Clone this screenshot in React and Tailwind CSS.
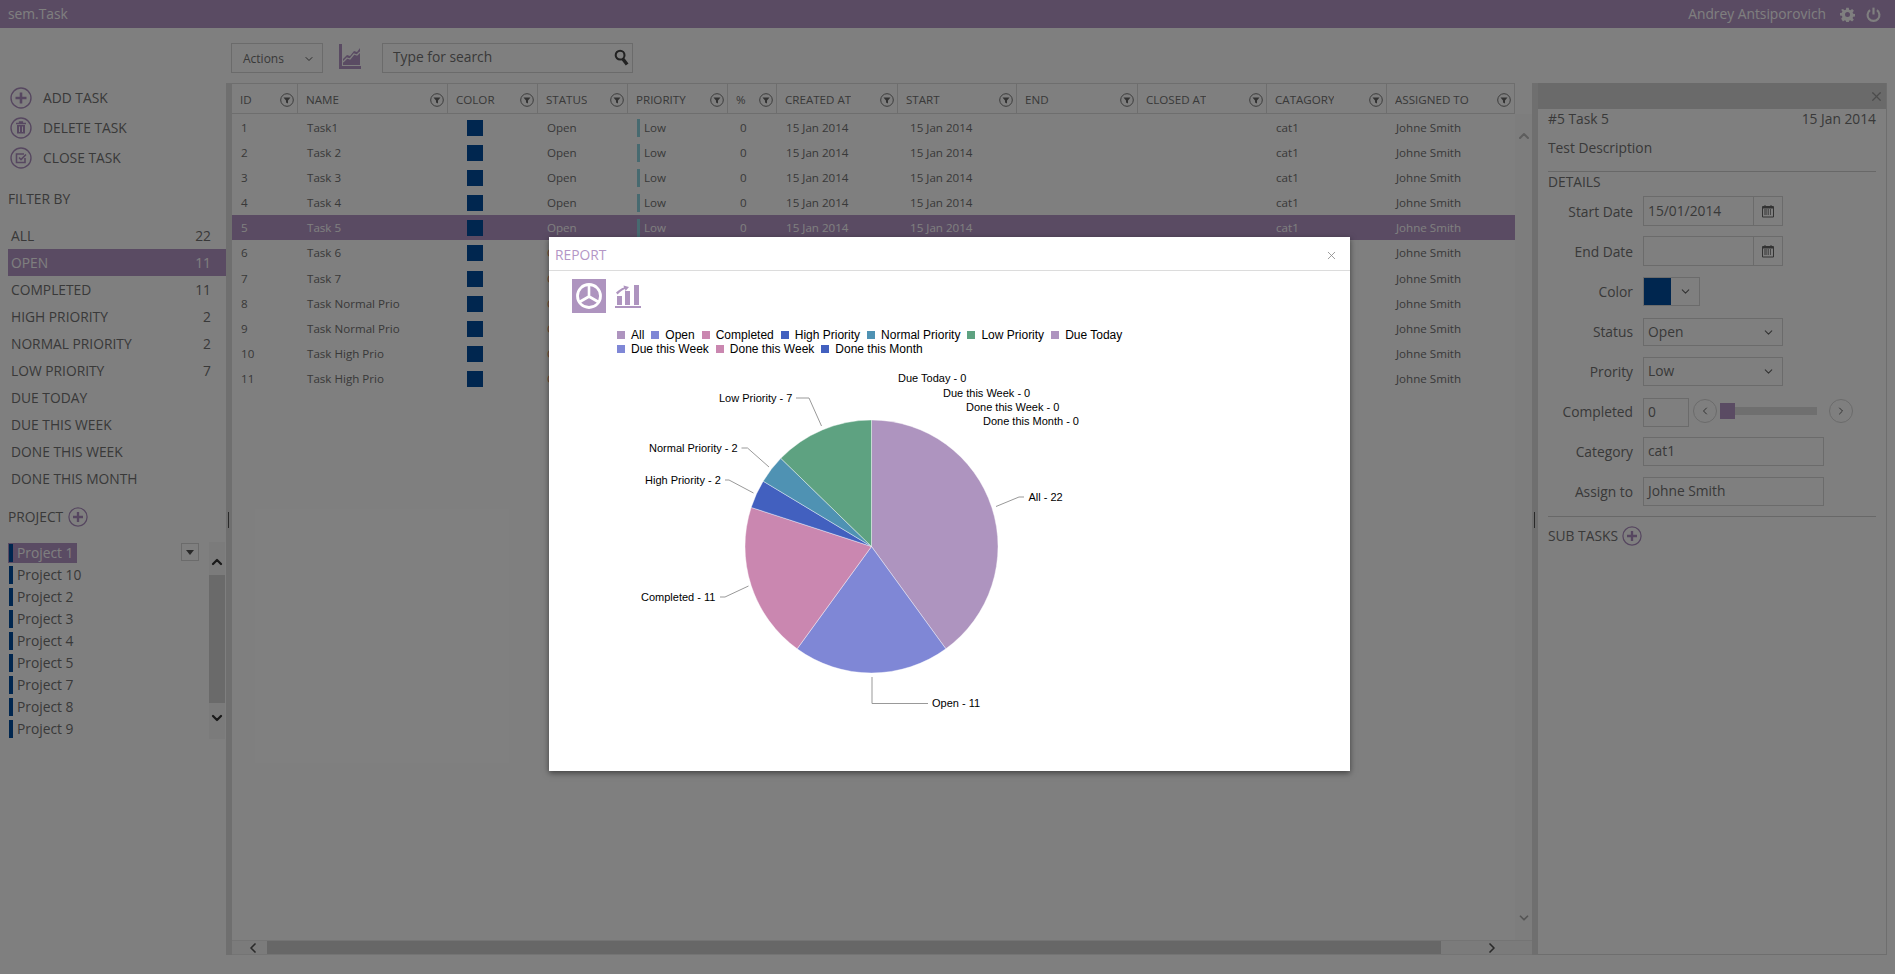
import { ChevronDown, ChevronLeft, ChevronRight, ChevronUp, X } from 'lucide-react';

const COLUMNS = [
  { label: 'ID' },
  { label: 'NAME' },
  { label: 'COLOR' },
  { label: 'STATUS' },
  { label: 'PRIORITY' },
  { label: '%' },
  { label: 'CREATED AT' },
  { label: 'START' },
  { label: 'END' },
  { label: 'CLOSED AT' },
  { label: 'CATAGORY' },
  { label: 'ASSIGNED TO' },
];

const TASKS = [
  { id: 1, name: 'Task1' },
  { id: 2, name: 'Task 2' },
  { id: 3, name: 'Task 3' },
  { id: 4, name: 'Task 4' },
  { id: 5, name: 'Task 5', selected: true },
  { id: 6, name: 'Task 6', late: true, tall: true },
  { id: 7, name: 'Task 7', late: true },
  { id: 8, name: 'Task Normal Prio', late: true },
  { id: 9, name: 'Task Normal Prio', late: true },
  { id: 10, name: 'Task High Prio', late: true },
  { id: 11, name: 'Task High Prio', late: true },
];

const FILTERS = [
  { label: 'ALL', count: 22 },
  { label: 'OPEN', count: 11, selected: true },
  { label: 'COMPLETED', count: 11 },
  { label: 'HIGH PRIORITY', count: 2 },
  { label: 'NORMAL PRIORITY', count: 2 },
  { label: 'LOW PRIORITY', count: 7 },
  { label: 'DUE TODAY' },
  { label: 'DUE THIS WEEK' },
  { label: 'DONE THIS WEEK' },
  { label: 'DONE THIS MONTH' },
];

const PROJECTS = ['Project 1', 'Project 10', 'Project 2', 'Project 3', 'Project 4', 'Project 5', 'Project 7', 'Project 8', 'Project 9'];

const LEGEND = [
  [
    { label: 'All', color: '#ae94bf' },
    { label: 'Open', color: '#7f87d6' },
    { label: 'Completed', color: '#ca87b0' },
    { label: 'High Priority', color: '#4260bf' },
    { label: 'Normal Priority', color: '#4f92b3' },
    { label: 'Low Priority', color: '#5ea281' },
    { label: 'Due Today', color: '#ae94bf' },
  ],
  [
    { label: 'Due this Week', color: '#7f87d6' },
    { label: 'Done this Week', color: '#ca87b0' },
    { label: 'Done this Month', color: '#4260bf' },
  ],
];

const SLICES = [
  { value: 22, color: '#ae94bf' },
  { value: 11, color: '#7f87d6' },
  { value: 11, color: '#ca87b0' },
  { value: 2, color: '#4260bf' },
  { value: 2, color: '#4f92b3' },
  { value: 7, color: '#5ea281' },
];

const PIE_LABELS = [
  { text: 'Due Today - 0', x: 898, y: 379 },
  { text: 'Due this Week - 0', x: 943, y: 393.5 },
  { text: 'Done this Week - 0', x: 966, y: 407.5 },
  { text: 'Done this Month - 0', x: 983, y: 421.5 },
  { text: 'Low Priority - 7', x: 719, y: 398.5, line: '796,399 809,399 821.5,427' },
  { text: 'Normal Priority - 2', x: 649, y: 448.5, line: '741.5,449 747.5,449 769,468' },
  { text: 'High Priority - 2', x: 645, y: 480.5, line: '725,481 729,481 753.5,494' },
  { text: 'Completed - 11', x: 641, y: 597.5, line: '720,598 725,598 748.5,587' },
  { text: 'All - 22', x: 1028.5, y: 497.5, line: '1024,498 1019,498 996,507.5' },
  { text: 'Open - 11', x: 932, y: 703.5, line: '928,704.5 872,704.5 872,678' },
];

function slicePaths(cx, cy, r) {
  const total = SLICES.reduce((sum, s) => sum + s.value, 0);
  let angle = 0;
  return SLICES.map((s) => {
    const start = angle;
    angle += (s.value / total) * Math.PI * 2;
    const x1 = cx + r * Math.sin(start);
    const y1 = cy - r * Math.cos(start);
    const x2 = cx + r * Math.sin(angle);
    const y2 = cy - r * Math.cos(angle);
    const large = angle - start > Math.PI ? 1 : 0;
    return { color: s.color, d: `M${cx} ${cy}L${x1} ${y1}A${r} ${r} 0 ${large} 1 ${x2} ${y2}Z` };
  });
}

function FilterIcon() {
  return (
    <svg viewBox="0 0 14 14" className="w-[14px] h-[14px] shrink-0">
      <circle cx="7" cy="7" r="6.3" fill="none" stroke="#777" strokeWidth="1" />
      <path d="M3.5 4.5h7L8 7.6V10.5L6 9.4V7.6z" fill="#666" />
    </svg>
  );
}

function CircleIcon({ children, className = 'w-[22px] h-[22px]' }) {
  return (
    <svg viewBox="0 0 22 22" className={`${className} shrink-0`}>
      <circle cx="11" cy="11" r="10" fill="none" stroke="#ad8fc0" strokeWidth="1.4" />
      {children}
    </svg>
  );
}

function PlusIcon({ className }) {
  return (
    <CircleIcon className={className}>
      <path d="M11 5.5v11M5.5 11h11" stroke="#ad8fc0" strokeWidth="2.6" />
    </CircleIcon>
  );
}

function CalendarIcon() {
  return (
    <svg viewBox="0 0 12 13" className="w-[12px] h-[14px]">
      <path d="M0.5 2h11v10.5h-11z" fill="none" stroke="#666" />
      <path d="M1 2h10v2H1z" fill="#666" />
      <path d="M2 5.5h8M2 7.5h8M2 9.5h8M3.500 5v6M6 5v6M8.500 5v6" stroke="#666" strokeWidth="1" strokeDasharray="1 1" />
      <path d="M3 0.5v2M9 0.5v2" stroke="#666" />
    </svg>
  );
}

function TextField({ label, value, width = 'w-[181px]', children, height = 'h-[29px]', labelClass = '' }) {
  return (
    <div className="flex items-center">
      <div className={`w-[85px] text-right text-[13.8px] leading-none ${labelClass}`}>{label}</div>
      <div className={`ml-[10px] flex items-center ${width} ${height} border border-[#d6d6d6] text-[13.8px]`}>
        <span className="flex-1 pl-[4px]">{value}</span>
        {children}
      </div>
    </div>
  );
}

function Header() {
  return (
    <header className="flex items-center justify-between h-[28px] bg-[#b496c6] pl-[8px] pr-[14px] text-white text-[13.8px]">
      <div>sem.Task</div>
      <div className="flex items-center">
        <span>Andrey Antsiporovich</span>
        <svg viewBox="0 0 24 24" className="w-[15px] h-[15px] ml-[14px]" fill="#fff">
          <path d="M10 1h4l.6 3.2 2 .9L19.4 3l2.8 2.8-2.1 2.8.9 2 3 .4v4l-3 .5-.9 2 2 2.7-2.8 2.8-2.8-2-2 .8-.5 3.1h-4l-.5-3.1-2-.8-2.8 2L1.9 18.800l2-2.700-.9-2-3-.5v-4l3-.4.9-2-2.100-2.800L4.600 3l2.800 2.100 2-.9zM12 8a4 4 0 100 8 4 4 0 000-8z" />
        </svg>
        <svg viewBox="0 0 24 24" className="w-[15px] h-[15px] ml-[11px]" fill="none" stroke="#fff" strokeWidth="3.4">
          <path d="M12 1v11" />
          <path d="M6.500 5a9.500 9.500 0 1011 0" />
        </svg>
      </div>
    </header>
  );
}

function Toolbar() {
  return (
    <div className="flex items-start h-[55px] pt-[15px] pl-[231px]">
      <div className="flex items-center justify-between w-[92px] h-[30px] border border-[#d6d6d6] pl-[11px] pr-[7px] pt-[1px] text-[12px]">
        Actions
        <ChevronDown className="w-[12px] h-[12px] text-[#555]" strokeWidth={2} />
      </div>
      <svg viewBox="0 0 22 25" className="w-[22px] h-[25px] ml-[16px] mt-[1px]" fill="none">
        <path d="M1.500 0v23.500H22" stroke="#b496c6" strokeWidth="3" />
        <path d="M4 21V15l4-4 3 1 4-5 3 1 3-4v17z" fill="#b496c6" />
        <path d="M4 18l4-4 3 1 4-5 3 1 3-3" stroke="#fff" strokeWidth="1.300" />
      </svg>
      <div className="flex items-center justify-between w-[251px] h-[30px] border border-[#d6d6d6] ml-[21px] pl-[10px] pr-[3px] text-[13.8px] pb-[1px]">
        Type for search
        <svg viewBox="0 0 16 18" className="w-[15px] h-[17px]" fill="none" stroke="#444">
          <circle cx="6.500" cy="6.500" r="4.700" strokeWidth="2.200" />
          <path d="M9.500 10.500l4.500 6" strokeWidth="3.600" />
        </svg>
      </div>
    </div>
  );
}

function Sidebar() {
  return (
    <aside className="w-[226px] shrink-0 text-[13.8px]">
      <div className="flex flex-col pl-[10px]">
        <div className="flex items-center h-[30px] gap-[11px]">
          <PlusIcon />
          ADD TASK
        </div>
        <div className="flex items-center h-[30px] gap-[11px]">
          <CircleIcon>
            <path d="M7 8h8v8.500H7z" fill="#ad8fc0" />
            <path d="M6 6.500h10M9.500 6V5h3v1" fill="none" stroke="#ad8fc0" strokeWidth="1.300" />
            <path d="M9.500 9.500v5.500M12.500 9.500v5.500" stroke="#fff" strokeWidth="1" />
          </CircleIcon>
          DELETE TASK
        </div>
        <div className="flex items-center h-[30px] gap-[11px]">
          <CircleIcon>
            <path d="M14 7H6.500v8.500H15V11" fill="none" stroke="#ad8fc0" strokeWidth="1.600" />
            <path d="M9 10.500l2 2 5-5" fill="none" stroke="#ad8fc0" strokeWidth="1.600" />
          </CircleIcon>
          CLOSE TASK
        </div>
      </div>
      <div className="pl-[8px] mt-[16px] leading-[20px]">FILTER BY</div>
      <div className="mt-[13px] pl-[8px]">
        {FILTERS.map((f) => (
          <div
            key={f.label}
            className={`flex items-center justify-between h-[27px] pl-[3px] pr-[15px] pt-[2px] ${f.selected ? 'bg-[#b496c6] text-white' : ''}`}
          >
            <span>{f.label}</span>
            <span>{f.count}</span>
          </div>
        ))}
      </div>
      <div className="flex items-center h-[20px] gap-[5px] mt-[15px] pl-[8px]">
        PROJECT
        <PlusIcon className="w-[20px] h-[20px]" />
      </div>
      <div className="flex mt-[15px] pl-[8px]">
        <div className="flex-1 relative">
          {PROJECTS.map((p, i) => (
            <div key={p} className="h-[22px] flex items-center">
              <div className={`flex items-center h-[20px] pr-[4px] pl-[1px] ${i === 0 ? 'bg-[#b496c6] text-white' : ''}`}>
                <span className="w-[4px] h-[18px] bg-[#004c9e] mr-[4px]" />
                {p}
              </div>
            </div>
          ))}
          <div className="absolute right-[10px] top-[1px] flex items-center justify-center w-[18px] h-[18px] border border-[#d6d6d6]">
            <div className="w-0 h-0 border-x-[4px] border-x-transparent border-t-[5px] border-t-[#555]" />
          </div>
        </div>
        <div className="flex flex-col w-[16px] h-[197px] mr-[1px] bg-[#f6f6f6]">
          <div className="flex items-center justify-center h-[33px] pt-[6px]">
            <ChevronUp className="w-[16px] h-[16px] text-[#333]" strokeWidth={3.4} />
          </div>
          <div className="h-[128px] bg-[#d4d4d4]" />
          <div className="flex items-center justify-center h-[36px] pb-[6px]">
            <ChevronDown className="w-[16px] h-[16px] text-[#333]" strokeWidth={3.4} />
          </div>
        </div>
      </div>
    </aside>
  );
}

const GRID = 'grid grid-cols-[66px_150px_90px_90px_100px_49px_121px_119px_121px_129px_120px_128px]';

function TaskRow({ task }) {
  const cell = 'pl-[9px] truncate';
  return (
    <div className={`${GRID} items-center ${task.tall ? 'h-[26px]' : 'h-[25px]'} ${task.selected ? 'bg-[#b496c6] text-white' : ''}`}>
      <div className={cell}>{task.id}</div>
      <div className={cell}>{task.name}</div>
      <div className="pl-[19px]">
        <div className="w-[16px] h-[16px] bg-[#004c9e]" />
      </div>
      <div className={`${cell} ${task.late ? 'text-[#e08a50]' : ''}`}>Open</div>
      <div className="flex items-center pl-[9px]">
        <span className="w-[3px] h-[18px] bg-[#8ed4e0] mr-[4px]" />
        Low
      </div>
      <div className="pl-[12px]">0</div>
      <div className={cell}>15 Jan 2014</div>
      <div className="pl-[12px] truncate">15 Jan 2014</div>
      <div />
      <div />
      <div className={cell}>cat1</div>
      <div className={cell}>Johne Smith</div>
    </div>
  );
}

function TaskGrid() {
  return (
    <main className="w-[1300px] shrink-0 flex flex-col text-[11.6px]">
      <div className="flex h-[31px]">
        <div className={`${GRID} w-[1283px] border-y border-[#dcdcdc]`}>
          {COLUMNS.map((c) => (
            <div key={c.label} className="flex items-center justify-between pl-[8px] pr-[3px] pt-[2px] border-r border-[#dcdcdc]">
              <span className="truncate">{c.label}</span>
              <FilterIcon />
            </div>
          ))}
        </div>
      </div>
      <div className="flex flex-1 min-h-0">
        <div className="w-[1283px] pt-[1px]">
          {TASKS.map((t) => (
            <TaskRow key={t.id} task={t} />
          ))}
        </div>
        <div className="flex flex-col justify-between items-center w-[17px] bg-[#fafafa] pt-[14px] pb-[15px]">
          <ChevronUp className="w-[16px] h-[16px] text-[#bbb]" strokeWidth={3} />
          <ChevronDown className="w-[14px] h-[14px] text-[#aaa]" strokeWidth={3} />
        </div>
      </div>
      <div className="flex items-center h-[15px] bg-[#f6f6f6] border-y border-[#e8e8e8]">
        <ChevronLeft className="w-[16px] h-[16px] text-[#555] ml-[13px]" strokeWidth={2.500} />
        <div className="w-[1174px] h-full bg-[#cfcfcf] ml-[6px]" />
        <ChevronRight className="w-[16px] h-[16px] text-[#555] ml-[43px]" strokeWidth={2.500} />
      </div>
    </main>
  );
}

function DetailPanel() {
  return (
    <aside className="w-[349px] shrink-0 flex flex-col border-r border-b border-[#dcdcdc] text-[13.8px]">
      <div className="flex items-center justify-end h-[26px] bg-[#d4d4d4] pr-[2px] shrink-0">
        <X className="w-[15px] h-[15px] text-[#999]" strokeWidth={2} />
      </div>
      <div className="px-[10px]">
        <div className="flex justify-between h-[20px] items-center">
          <span>#5 Task 5</span>
          <span>15 Jan 2014</span>
        </div>
        <div className="mt-[9px] h-[20px] flex items-center">Test Description</div>
        <div className="mt-[13px] border-t border-[#d0d0d0] h-[22px] flex items-center">DETAILS</div>
        <div className="flex flex-col">
          <div className="mt-[3px]">
            <TextField label="Start Date" value="15/01/2014" width="w-[140px]" height="h-[30px]" labelClass="pt-[2px]">
              <div className="flex items-center justify-center w-[29px] h-full border-l border-[#d6d6d6]">
                <CalendarIcon />
              </div>
            </TextField>
          </div>
          <div className="mt-[10px]">
            <TextField label="End Date" value="" width="w-[140px]" height="h-[30px]" labelClass="pt-[2px]">
              <div className="flex items-center justify-center w-[29px] h-full border-l border-[#d6d6d6]">
                <CalendarIcon />
              </div>
            </TextField>
          </div>
          <div className="flex items-center mt-[11px]">
            <div className="w-[85px] text-right leading-none">Color</div>
            <div className="ml-[10px] flex items-center w-[57px] h-[29px] border border-[#d6d6d6]">
              <div className="w-[27px] h-full bg-[#004c9e]" />
              <ChevronDown className="w-[13px] h-[13px] ml-[8px] text-[#666]" />
            </div>
          </div>
          <div className="mt-[12px]">
            <TextField label="Status" value="Open" width="w-[140px]" height="h-[28px]">
              <ChevronDown className="w-[13px] h-[13px] mr-[7px] text-[#666]" />
            </TextField>
          </div>
          <div className="mt-[11px]">
            <TextField label="Prority" value="Low" width="w-[140px]">
              <ChevronDown className="w-[13px] h-[13px] mr-[7px] text-[#666]" />
            </TextField>
          </div>
          <div className="flex items-center mt-[12px]">
            <div className="w-[85px] text-right leading-none pb-[2px]">Completed</div>
            <div className="ml-[10px] w-[46px] h-[29px] border border-[#d6d6d6] flex items-center pl-[4px]">0</div>
            <div className="flex items-center justify-center w-[24px] h-[24px] rounded-full border border-[#d6d6d6] ml-[4px] -mt-[4px]">
              <ChevronLeft className="w-[12px] h-[12px] text-[#666]" />
            </div>
            <div className="flex items-center w-[97px] ml-[3px] -mt-[4px]">
              <div className="w-[15px] h-[16px] bg-[#b496c6] shrink-0" />
              <div className="flex-1 h-[8px] bg-[#dedede]" />
            </div>
            <div className="flex items-center justify-center w-[24px] h-[24px] rounded-full border border-[#d6d6d6] ml-[12px] -mt-[4px]">
              <ChevronRight className="w-[12px] h-[12px] text-[#666]" />
            </div>
          </div>
          <div className="mt-[10px]">
            <TextField label="Category" value="cat1" />
          </div>
          <div className="mt-[11px]">
            <TextField label="Assign to" value="Johne Smith" />
          </div>
        </div>
        <div className="mt-[10px] border-t border-[#d0d0d0] flex items-center gap-[4px] pt-[9px]">
          SUB TASKS
          <PlusIcon className="w-[20px] h-[20px]" />
        </div>
      </div>
    </aside>
  );
}

function ReportModal() {
  return (
    <div className="absolute left-[549px] top-[237px] w-[801px] h-[534px] bg-white shadow-[0_2px_6px_rgba(0,0,0,0.5)] flex flex-col z-20">
      <div className="flex items-center justify-between h-[34px] border-b border-[#dcdcdc] pl-[6px] pr-[12px] pt-[3px] text-[13.8px] text-[#b496c6] shrink-0">
        REPORT
        <X className="w-[13px] h-[13px] text-[#888]" strokeWidth={1.500} />
      </div>
      <div className="flex items-center h-[34px] mt-[8px] pl-[23px] shrink-0">
        <div className="flex items-center justify-center w-[34px] h-[34px] bg-[#ae94bf]">
          <svg viewBox="0 0 28 28" className="w-[28px] h-[28px]" fill="none" stroke="#fff">
            <circle cx="14" cy="14" r="11.500" strokeWidth="2.800" />
            <path d="M14 15V3M14 14.500L3.600 20.500M14 14.500l10.400 6" strokeWidth="2.600" />
          </svg>
        </div>
        <svg viewBox="0 0 26 24" className="w-[26px] h-[24px] ml-[9px]" fill="#ae94bf">
          <path d="M0 22h26v2H0zM2 12h5v9H2zM10 7h5v14h-5zM19 1h5v20h-5z" />
          <path d="M1 8.500C4 6 6 4.500 9 3.500L8.500 1.500 14 3 10.500 7l-.5-2C7 6 5 8 2.500 10.500z" />
        </svg>
      </div>
      <div className="mt-[15px] pl-[68px] font-['Liberation_Sans',sans-serif] text-[12px] text-black leading-[14px] shrink-0">
        {LEGEND.map((row, i) => (
          <div key={i} className="flex gap-[7px]">
            {row.map((item) => (
              <div key={item.label} className="flex items-center gap-[6px]">
                <span className="w-[8px] h-[8px]" style={{ background: item.color }} />
                {item.label}
              </div>
            ))}
          </div>
        ))}
      </div>
      <svg viewBox="549 360 801 411" className="w-[801px] h-[411px] mt-[3px] font-['Liberation_Sans',sans-serif] text-[11px]">
        {slicePaths(871.5, 547.5, 126.5).map((s) => (
          <path key={s.color} d={s.d} fill={s.color} stroke="#fff" strokeWidth="0.400" />
        ))}
        {PIE_LABELS.map((l) => (
          <g key={l.text}>
            {l.line && <polyline points={l.line} fill="none" stroke="#999" />}
            <text x={l.x} y={l.y + 4} fill="#000">{l.text}</text>
          </g>
        ))}
      </svg>
    </div>
  );
}

export default function App() {
  return (
    <div className="relative h-[974px] overflow-hidden bg-white text-[#727272] font-['Open_Sans',sans-serif]">
      <Header />
      <Toolbar />
      <div className="flex h-[872px]">
        <Sidebar />
        <div className="relative w-[6px] shrink-0 bg-[#dedede]">
          <div className="absolute left-[2px] top-[429px] w-px h-[16px] bg-[#555]" />
        </div>
        <TaskGrid />
        <div className="relative w-[6px] shrink-0 bg-[#dedede]">
          <div className="absolute left-[2px] top-[429px] w-px h-[16px] bg-[#555]" />
        </div>
        <DetailPanel />
      </div>
      {/* dim layer behind the report dialog */}
      <div className="absolute inset-0 bg-black/50 z-10" />
      <ReportModal />
    </div>
  );
}
